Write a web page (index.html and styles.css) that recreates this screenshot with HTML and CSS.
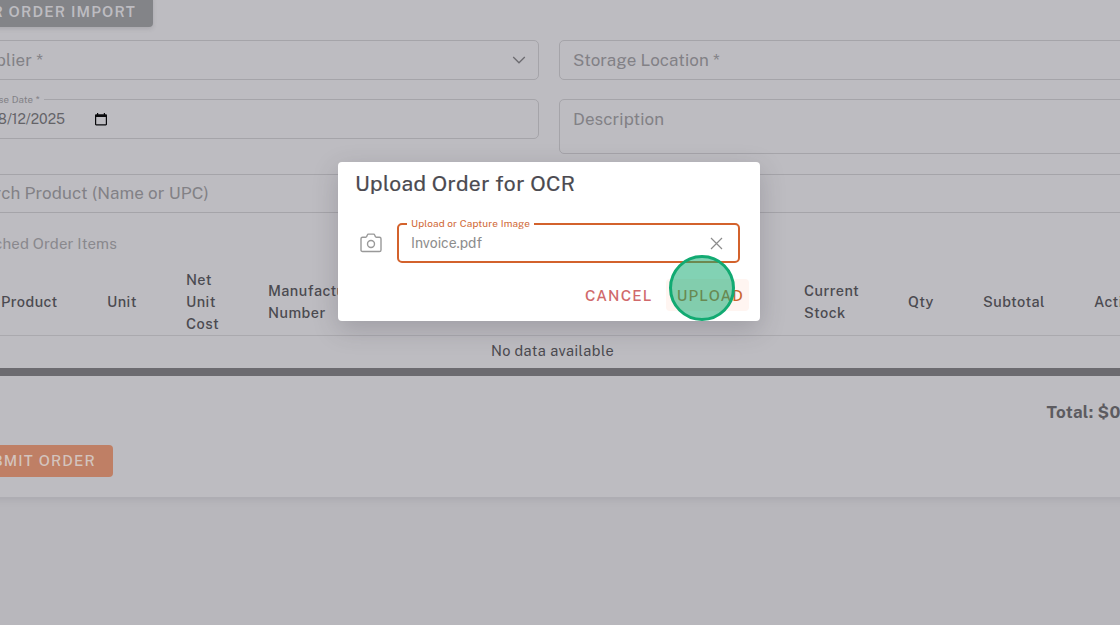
FILE: index.html
```html
<!DOCTYPE html>
<html lang="en">
<head>
    <meta charset="UTF-8">
    <meta name="viewport" content="width=device-width, initial-scale=1.0">
    <title>Upload Order for OCR</title>
    <link rel="stylesheet" href="styles.css">
</head>
<body>
    <main class="card">
        <button class="btn btn-import">OCR ORDER IMPORT</button>

        <div class="form-grid">
            <div class="field">
                <span class="placeholder supplier">Supplier *</span>
                <svg class="chevron" width="14" height="8" viewBox="0 0 14 8" fill="none" stroke="currentColor" stroke-width="1.3"><path d="M1.2 1 7 6.8 12.8 1"/></svg>
            </div>
            <div class="field">
                <span class="placeholder">Storage Location *</span>
            </div>
            <div class="field">
                <span class="float-label">Purchase Date *</span>
                <span class="date">08/12/2025</span>
                <svg class="calendar" width="12" height="13" viewBox="0 0 12 13"><path fill="#09090c" fill-rule="evenodd" d="M2 0h1.2v1.2h5.6V0H10v1.2h.8c.7 0 1.2.5 1.2 1.2v8.9c0 .7-.5 1.2-1.2 1.2H1.2C.5 12.5 0 12 0 11.3V2.4c0-.7.5-1.2 1.2-1.2H2zM1.2 4v7.3h9.6V4z"/></svg>
            </div>
            <div class="field field-area">
                <span class="placeholder">Description</span>
            </div>
        </div>

        <div class="field search">
            <span class="placeholder search-text">Search Product (Name or UPC)</span>
        </div>

        <h2 class="subtitle">Matched Order Items</h2>

        <table class="items">
            <colgroup>
                <col class="c-index"><col class="c-product"><col class="c-unit"><col class="c-cost"><col class="c-maker"><col class="c-stock"><col class="c-qty"><col class="c-subtotal"><col>
            </colgroup>
            <thead>
                <tr>
                    <th></th>
                    <th>Product</th>
                    <th>Unit</th>
                    <th>Net<br>Unit<br>Cost</th>
                    <th>Manufacturer<br>Number</th>
                    <th>Current<br>Stock</th>
                    <th>Qty</th>
                    <th>Subtotal</th>
                    <th>Actions</th>
                </tr>
            </thead>
            <tbody>
                <tr><td colspan="9">No data available</td></tr>
            </tbody>
        </table>
        <div class="scrollbar"></div>

        <div class="total">Total: $0.00</div>
        <button class="btn btn-submit">SUBMIT ORDER</button>
    </main>

    <div class="dialog" role="dialog">
        <h1>Upload Order for OCR</h1>
        <div class="upload-row">
            <svg class="camera" width="22" height="20" viewBox="0 0 22 20" fill="none" stroke="#999" stroke-width="1.4" stroke-linejoin="round"><path d="M2.6 4.2h3.1c.5 0 .8-.2 1-.7l.6-1.5c.2-.6.5-.9 1.1-.9h5.2c.6 0 .9.3 1.1.9l.6 1.5c.2.5.5.7 1 .7h3.1c1 0 1.6.6 1.6 1.6v11.1c0 1-.6 1.6-1.6 1.6H2.6c-1 0-1.6-.6-1.6-1.6V5.8c0-1 .6-1.6 1.6-1.6z"/><circle cx="11" cy="11" r="3.5"/></svg>
            <div class="file-field">
                <span class="file-label">Upload or Capture Image</span>
                <span class="file-name">Invoice.pdf</span>
                <svg width="13" height="13" viewBox="0 0 13 13" stroke="#8c8c8c" stroke-width="1.2"><path d="M1 1l11 11M12 1 1 12"/></svg>
            </div>
        </div>
        <div class="actions">
            <button class="action cancel">CANCEL</button>
            <button class="action upload">UPLOAD</button>
        </div>
        <span class="click-marker"></span>
    </div>
</body>
</html>
```
FILE: styles.css
```css
* { box-sizing: border-box; }
body { margin: 0; height: 625px; overflow: hidden; background: #b8b7bc; font-family: 'Public Sans', Inter, sans-serif; color: #4b4a50; }
button { border: none; font-family: inherit; }

/* the card is wider than the window and runs off both sides */
.card { width: 1224px; height: 502px; margin: -5px 0 0 -62px; padding: 0 16px; background: #bdbcc1; box-shadow: 0 2px 8px rgba(60,55,70,0.12); }
.btn { display: block; height: 32px; border-radius: 4px; font-size: 15px; font-weight: 500; letter-spacing: 1.15px; line-height: 32px; text-align: right; white-space: nowrap; }
.btn-import { width: 199px; padding: 2px 17px 0 0; background: #838488; color: #bdbcc1; font-weight: 600; line-height: 30px; box-shadow: 0 2px 4px rgba(60,60,70,0.15); }
.btn-submit { width: 159px; margin-top: 21px; padding: 0 17px 0 0; background: #bf7f65; color: #d3c4be; }

.form-grid { display: grid; grid-template-columns: 585px 586px; column-gap: 20px; row-gap: 19px; align-items: start; margin-top: 13px; }
.field { position: relative; display: flex; align-items: center; height: 40px; padding: 0 13px; border: 1px solid #a5a4a9; border-radius: 5px; }
.field-area { height: 55px; align-items: flex-start; padding-top: 9px; }
.placeholder { font-size: 17px; line-height: 20px; letter-spacing: 0.1px; color: #828186; white-space: nowrap; }
.supplier { margin-left: -4px; }
.search-text { margin: -1px 0 0 -4px; }
.chevron { margin: 0 -1px 0 auto; color: #6d6c71; }
.float-label { position: absolute; top: -6px; left: 7px; padding: 0 4px; background: #bdbcc1; font-size: 9.7px; line-height: 12px; color: #828186; letter-spacing: 0.15px; }
.date { width: 97px; font-size: 14px; text-align: right; color: #646368; }
.calendar { margin-left: 30px; }
.search { width: 1191px; margin-top: 20px; height: 39px; }

.subtitle { margin: 20px 0 0 13px; font-size: 15px; font-weight: 400; letter-spacing: 0.15px; line-height: 22px; color: #89888d; }
.items { width: 1191px; table-layout: fixed; border-collapse: collapse; margin-top: 12px; font-size: 14.5px; letter-spacing: 0.44px; }
.items th { height: 68px; padding: 1px 0 0 13px; border-bottom: 1px solid #aaa9ae; text-align: left; font-weight: 500; line-height: 22.3px; }
.items thead { position: relative; top: 0.5px; }
.items td { height: 33px; padding: 0 0 3px 6px; text-align: center; }
.c-index { width: 34px; }
.c-product { width: 106px; }
.c-unit { width: 79px; }
.c-cost { width: 82px; }
.c-maker { width: 536px; }
.c-stock { width: 104px; }
.c-qty { width: 75px; }
.c-subtotal { width: 111px; }
.scrollbar { height: 8px; background: #6c6b70; }
.total { margin: 24px 0 0 1092.5px; font-size: 17px; font-weight: 700; line-height: 24px; letter-spacing: 0.25px; color: #5c5b60; white-space: nowrap; }

.dialog { position: absolute; top: 162px; left: 338px; width: 422px; height: 159px; padding: 9px 20px 0 18px; background: #fff; border-radius: 4px; box-shadow: 0 8px 26px rgba(50,45,60,0.22); }
.dialog h1 { margin: 0 0 0 -1px; font-size: 21px; font-weight: 400; line-height: 26px; letter-spacing: 0.4px; color: #4b4a50; -webkit-text-stroke: 0.2px #4b4a50; white-space: nowrap; }
.upload-row { display: flex; align-items: center; margin-top: 26px; }
.camera { margin: 0 15px 0 4px; }
.file-field { position: relative; display: flex; align-items: center; justify-content: space-between; flex: 1; height: 40px; padding: 0 15px 0 12px; border: 2px solid #d3622c; border-radius: 5px; }
.file-label { position: absolute; top: -8px; left: 8px; padding: 0 4px; background: #fff; font-size: 10px; line-height: 12px; letter-spacing: 0.16px; color: #cf6836; white-space: nowrap; }
.file-name { font-size: 14px; color: #8c8c8c; }
.actions { display: flex; justify-content: flex-end; gap: 8px; margin: 16px -9px 0 0; }
.action { height: 32px; padding: 2px 5px 0 11px; border-radius: 4px; background: none; font-size: 15px; font-weight: 500; letter-spacing: 1.15px; line-height: 30px; }
.cancel { color: #d0696b; }
.upload { background: #fff5f1; color: #c9652f; }
.click-marker { position: absolute; top: 93px; left: 331px; width: 66px; height: 66px; border: 3px solid #12aa72; border-radius: 50%; background: rgba(18,170,114,0.53); }
```
